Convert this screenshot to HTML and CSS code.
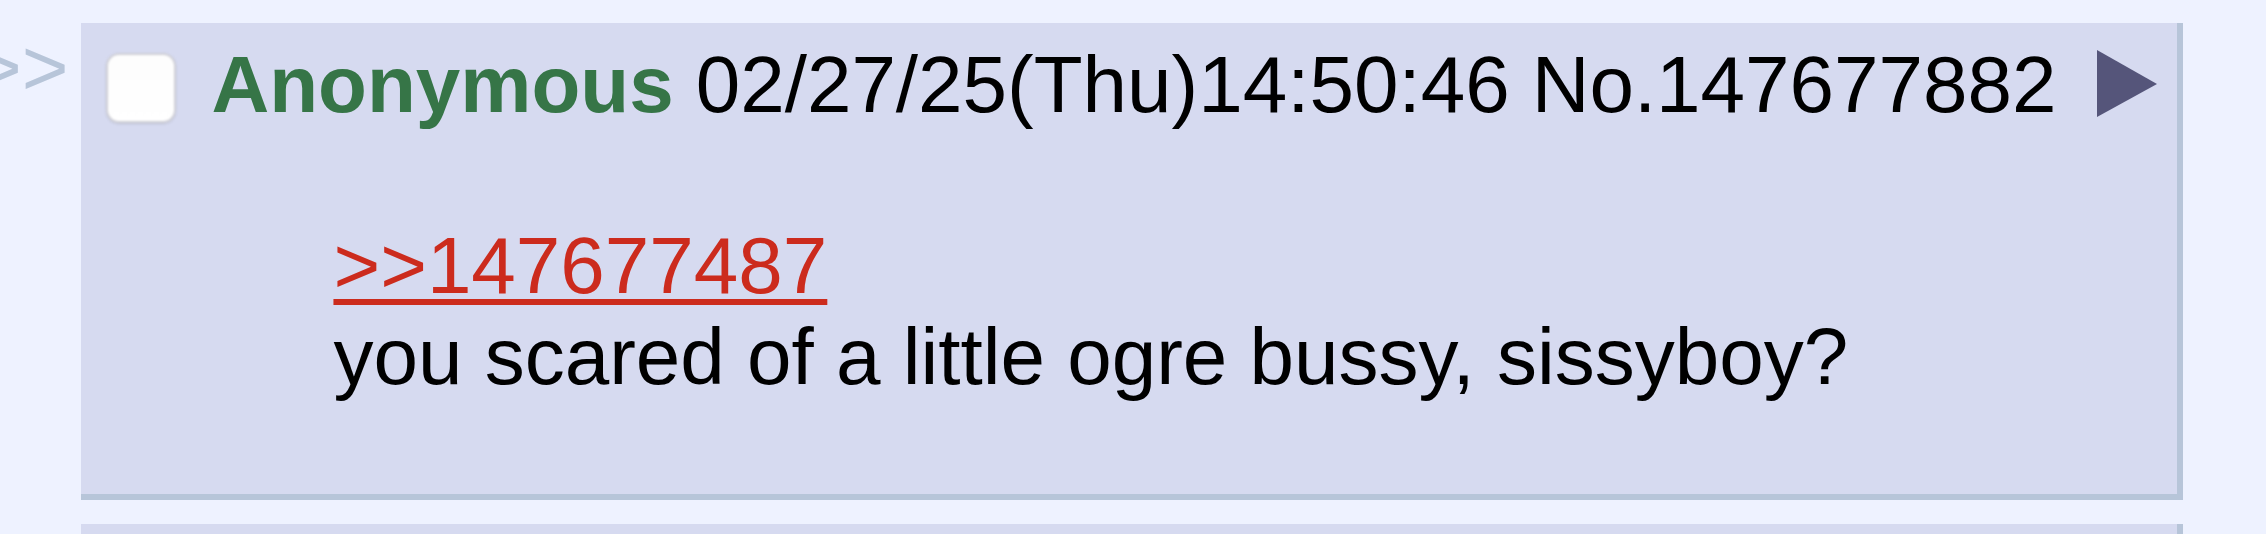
FILE: index.html
```html
<!DOCTYPE html>
<html lang="en">
<head>
<meta charset="utf-8">
<title>Thread</title>
<link rel="stylesheet" href="styles.css">
</head>
<body>
<div class="thread">
  <div class="reply-row">
    <div class="side-arrows">&gt;&gt;</div>
    <div class="post">
      <div class="post-info">
        <span class="post-check" role="checkbox" aria-checked="false"></span>
        <span class="name">Anonymous</span>
        <span class="date-time">02/27/25(Thu)14:50:46</span>
        <span class="post-num">No.147677882</span>
        <a class="menu-btn" aria-label="Post menu">
          <svg viewBox="0 0 60 67" width="60" height="67"><polygon points="0,0 60,34 0,67" fill="#55557a"/></svg>
        </a>
      </div>
      <blockquote class="post-message">
        <a class="quote-link" href="#p147677487">&gt;&gt;147677487</a><br>
        you scared of a little ogre bussy, sissyboy?
      </blockquote>
    </div>
  </div>
  <div class="reply-row">
    <div class="side-arrows">&gt;&gt;</div>
    <div class="post post-next">
      <div class="post-info"></div>
    </div>
  </div>
</div>
</body>
</html>
```

FILE: styles.css
```css
html, body {
  margin: 0;
  background: #eef2ff;
  overflow: hidden;
}

body {
  font-family: "Liberation Sans", Arial, sans-serif;
  font-size: 80px;
  color: #000;
}

.thread {
  display: grid;
  justify-content: start;
  padding-top: 23px;
}

.reply-row {
  display: flex;
  align-items: flex-start;
}

.reply-row + .reply-row {
  margin-top: 24px;
}

.side-arrows {
  color: #b7c5d9;
  line-height: 89px;
  margin-left: -25px;
  margin-right: 13px;
}

.post {
  flex: 1;
  background: #d6daf0;
  border-right: 6px solid #b7c5d9;
  border-bottom: 6px solid #b7c5d9;
  padding: 12px;
}

.post-info {
  display: flex;
  align-items: flex-start;
  line-height: 92px;
  height: 92px;
  padding: 4px 0 9px;
  white-space: nowrap;
}

.post-check {
  box-sizing: border-box;
  width: 70px;
  height: 70px;
  margin: 14px 35px 0 13px;
  background: linear-gradient(#fdfdfd, #ffffff);
  border: 2px solid #cfcfd6;
  border-radius: 13px;
  box-shadow: 0 1px 2px rgba(0, 0, 0, 0.12);
  filter: blur(1px);
}

.name {
  color: #367547;
  font-weight: 700;
}

.date-time {
  margin-left: 22px;
}

.post-num {
  margin-left: 22px;
}

.menu-btn {
  display: block;
  margin: 11px 8px 0 40px;
  line-height: 0;
}

.post-message {
  margin: 80px 240px;
  line-height: 91px;
}

.quote-link {
  color: #cc2b1d;
  text-decoration: underline;
  text-decoration-thickness: 6px;
  text-underline-offset: 6px;
}

.post-next .post-info {
  height: 200px;
}
```
